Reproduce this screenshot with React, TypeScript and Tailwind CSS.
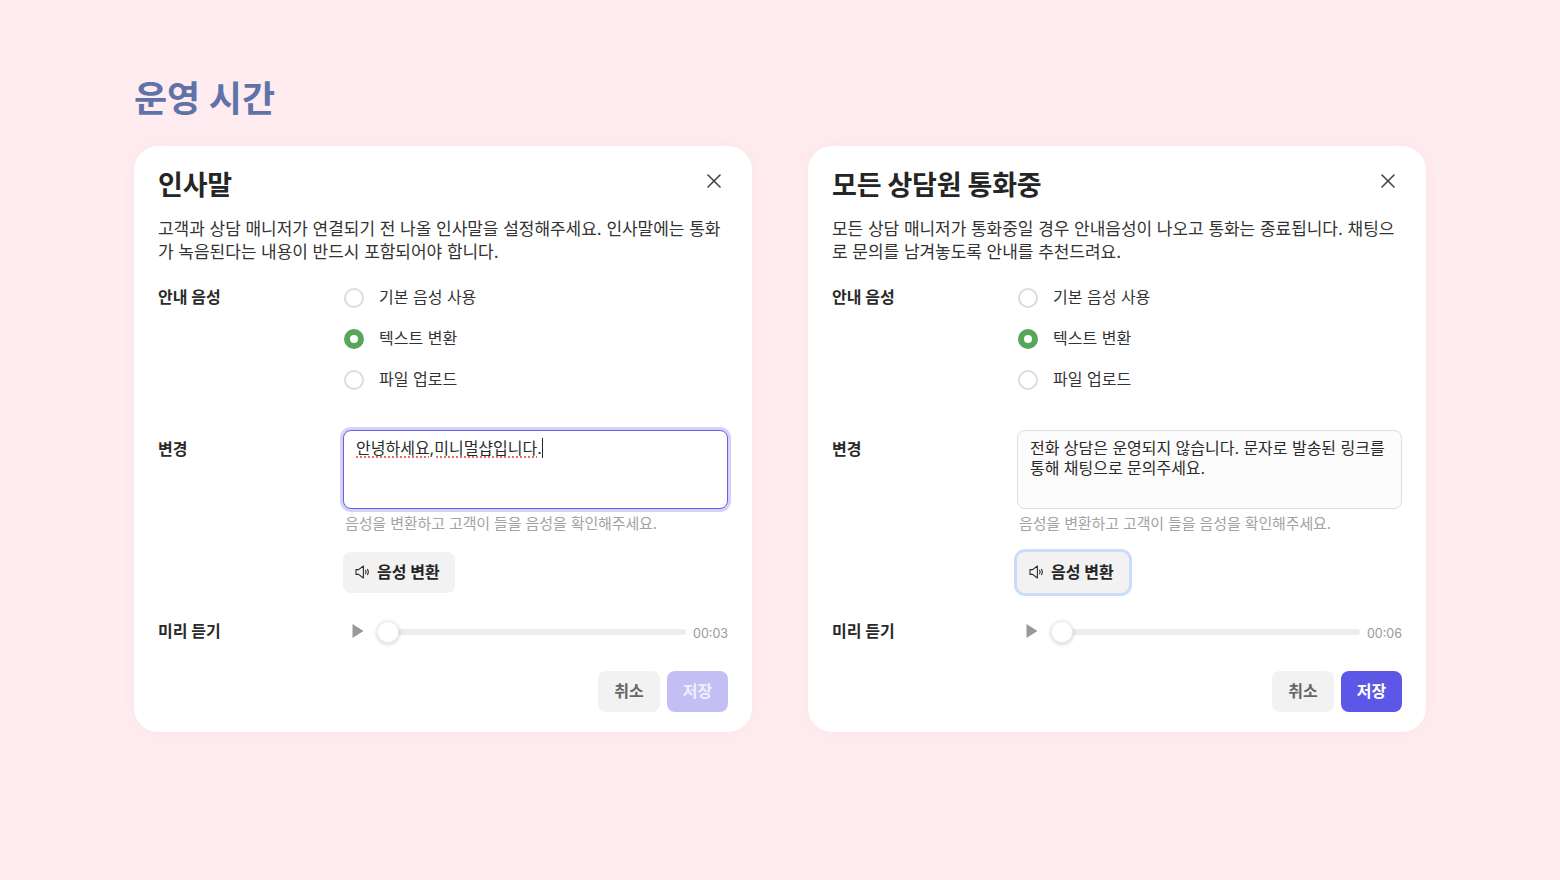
import { X } from 'lucide-react';

interface CardProps {
    title: string;
    desc: string[];
    duration: string;
    textFocused?: boolean;
    buttonFocused?: boolean;
    saveEnabled?: boolean;
    text: React.ReactNode;
}

function Radio({ label, checked }: { label: string; checked?: boolean }) {
    return (
        <div className="flex items-center h-[41px] gap-[15px]">
            <span
                className={
                    checked
                        ? 'w-[20px] h-[20px] ml-[1px] mt-[2px] rounded-full border-[6px] border-[#57a65c] bg-white'
                        : 'w-[20px] h-[20px] ml-[1px] mt-[2px] rounded-full border-2 border-[#dcdcdc] bg-white'
                }
            />
            <span className="text-[16px] leading-none text-[#333333]">{label}</span>
        </div>
    );
}

function SpeakerIcon() {
    return (
        <svg width="16" height="16" viewBox="0 0 16 16" fill="none" stroke="#2a2a2a" strokeWidth="1.1" strokeLinejoin="round" strokeLinecap="round">
            <path d="M1 5.6h2.6L8.4 2v12L3.6 10.4H1z" />
            <path d="M10.6 6.2c.7 1.1.7 2.5 0 3.6" />
            <path d="M12.6 5.4c1 1.6 1 3.6 0 5.2" />
        </svg>
    );
}

function Card({ title, desc, duration, textFocused, buttonFocused, saveEnabled, text }: CardProps) {
    return (
        <div className="w-[618px] h-[586px] bg-white rounded-[24px] px-[24px] pt-[20px] shadow-[0_0_12px_rgba(240,200,200,0.25)]">
            <div className="flex items-start justify-between h-[40px]">
                <h2 className="text-[27px] leading-[40px] font-bold text-[#252525] tracking-[-0.2px]">{title}</h2>
                <X className="w-[24px] h-[24px] mt-[3px] mr-[2px] text-[#444444]" strokeWidth={1.6} />
            </div>
            <p className="mt-[12px] text-[17px] leading-[23px] text-[#333333] h-[46px] tracking-[-0.04px]">
                {desc.map((line) => (
                    <span key={line} className="block whitespace-nowrap">{line}</span>
                ))}
            </p>

            {/* 안내 음성 */}
            <div className="grid grid-cols-[185px_1fr] mt-[12px]">
                <div className="text-[16px] leading-[43px] font-bold text-[#2a2a2a]">안내 음성</div>
                <div>
                    <Radio label="기본 음성 사용" />
                    <Radio label="텍스트 변환" checked />
                    <Radio label="파일 업로드" />
                </div>
            </div>

            {/* 변경 */}
            <div className="grid grid-cols-[185px_1fr] mt-[31px]">
                <div className="text-[16px] leading-[20px] pt-[9px] font-bold text-[#2a2a2a]">변경</div>
                <div>
                    <div
                        className={
                            textFocused
                                ? 'h-[79px] rounded-[8px] border-[1.5px] border-[#6660e0] bg-white ring-[3px] ring-[#d5d2f8] px-[12px] py-[7px] text-[16px] leading-[20px] text-[#2a2a2a]'
                                : 'h-[79px] rounded-[8px] border border-[#dedede] bg-[#fcfcfc] px-[12px] py-[7px] text-[16px] leading-[20px] text-[#2a2a2a] tracking-[-0.03px]'
                        }
                    >
                        {text}
                    </div>
                    <p className="mt-[5px] ml-[2px] text-[15px] leading-[20px] text-[#a3a3a3] tracking-[-0.12px]">음성을 변환하고 고객이 들을 음성을 확인해주세요.</p>
                    <button
                        className={
                            buttonFocused
                                ? 'mt-[18px] flex items-center gap-[6px] w-[112px] h-[41px] pl-[12px] pb-[1px] rounded-[8px] bg-[#f2f2f2] text-[16px] font-bold text-[#252525] ring-[3px] ring-[#c9def6]'
                                : 'mt-[18px] flex items-center gap-[6px] w-[112px] h-[41px] pl-[12px] pb-[1px] rounded-[8px] bg-[#f2f2f2] text-[16px] font-bold text-[#252525]'
                        }
                    >
                        <SpeakerIcon />
                        음성 변환
                    </button>
                </div>
            </div>

            {/* 미리 듣기 */}
            <div className="grid grid-cols-[185px_1fr] mt-[18px] items-center h-[41px]">
                <div className="text-[16px] font-bold text-[#2a2a2a] -mt-[2px]">미리 듣기</div>
                <div className="flex items-center">
                    <svg width="12" height="14" viewBox="0 0 12 14" className="ml-[9px] mr-[13px] -mt-[1px] shrink-0">
                        <path d="M0.5 0 11.5 7 0.5 14z" fill="#999999" />
                    </svg>
                    <div className="relative flex-1 h-[6px] rounded-full bg-[#ececec]">
                        <span className="absolute left-0 top-[-8px] w-[22px] h-[22px] rounded-full bg-white border border-[#eeeeee] shadow-[0_1px_4px_rgba(0,0,0,0.2)]" />
                    </div>
                    <span className="ml-[7px] mt-[6px] text-[12.5px] text-[#999999] font-['Inter',sans-serif]">{duration}</span>
                </div>
            </div>

            <div className="flex justify-end gap-[7px] mt-[19px]">
                <button className="w-[62px] h-[41px] pb-[2px] rounded-[8px] bg-[#f2f2f2] text-[16px] font-bold text-[#666666]">취소</button>
                <button
                    className={
                        saveEnabled
                            ? 'w-[61px] h-[41px] pb-[2px] rounded-[8px] bg-[#5c57e6] text-[16px] font-bold text-white'
                            : 'w-[61px] h-[41px] pb-[2px] rounded-[8px] bg-[#c3bff5] text-[16px] font-bold text-[#f1effd]'
                    }
                >
                    저장
                </button>
            </div>
        </div>
    );
}

export default function App() {
    return (
        <div className="w-[1560px] h-[880px] bg-[#ffecf0] pl-[134px] pt-[73px] overflow-hidden font-['Inter','Noto_Sans_CJK_KR',sans-serif]">
            <h1 className="text-[36px] leading-[52px] font-bold text-[#5f73a8]">운영 시간</h1>
            <div className="flex gap-[56px] mt-[21px]">
                <Card
                    title="인사말"
                    desc={[
                        '고객과 상담 매니저가 연결되기 전 나올 인사말을 설정해주세요. 인사말에는 통화',
                        '가 녹음된다는 내용이 반드시 포함되어야 합니다.',
                    ]}
                    duration="00:03"
                    textFocused
                    text={
                        <span className="inline-flex items-center">
                            <span className="underline decoration-dotted decoration-[#ec6a5e] decoration-2 underline-offset-[2px]">안녕하세요,미니멀샵입니다</span>
                            .
                            <span className="inline-block w-px h-[20px] bg-[#222222]" />
                        </span>
                    }
                />
                <Card
                    title="모든 상담원 통화중"
                    desc={[
                        '모든 상담 매니저가 통화중일 경우 안내음성이 나오고 통화는 종료됩니다. 채팅으',
                        '로 문의를 남겨놓도록 안내를 추천드려요.',
                    ]}
                    duration="00:06"
                    buttonFocused
                    saveEnabled
                    text={
                        <>
                            전화 상담은 운영되지 않습니다. 문자로 발송된 링크를
                            <br />
                            통해 채팅으로 문의주세요.
                        </>
                    }
                />
            </div>
        </div>
    );
}
